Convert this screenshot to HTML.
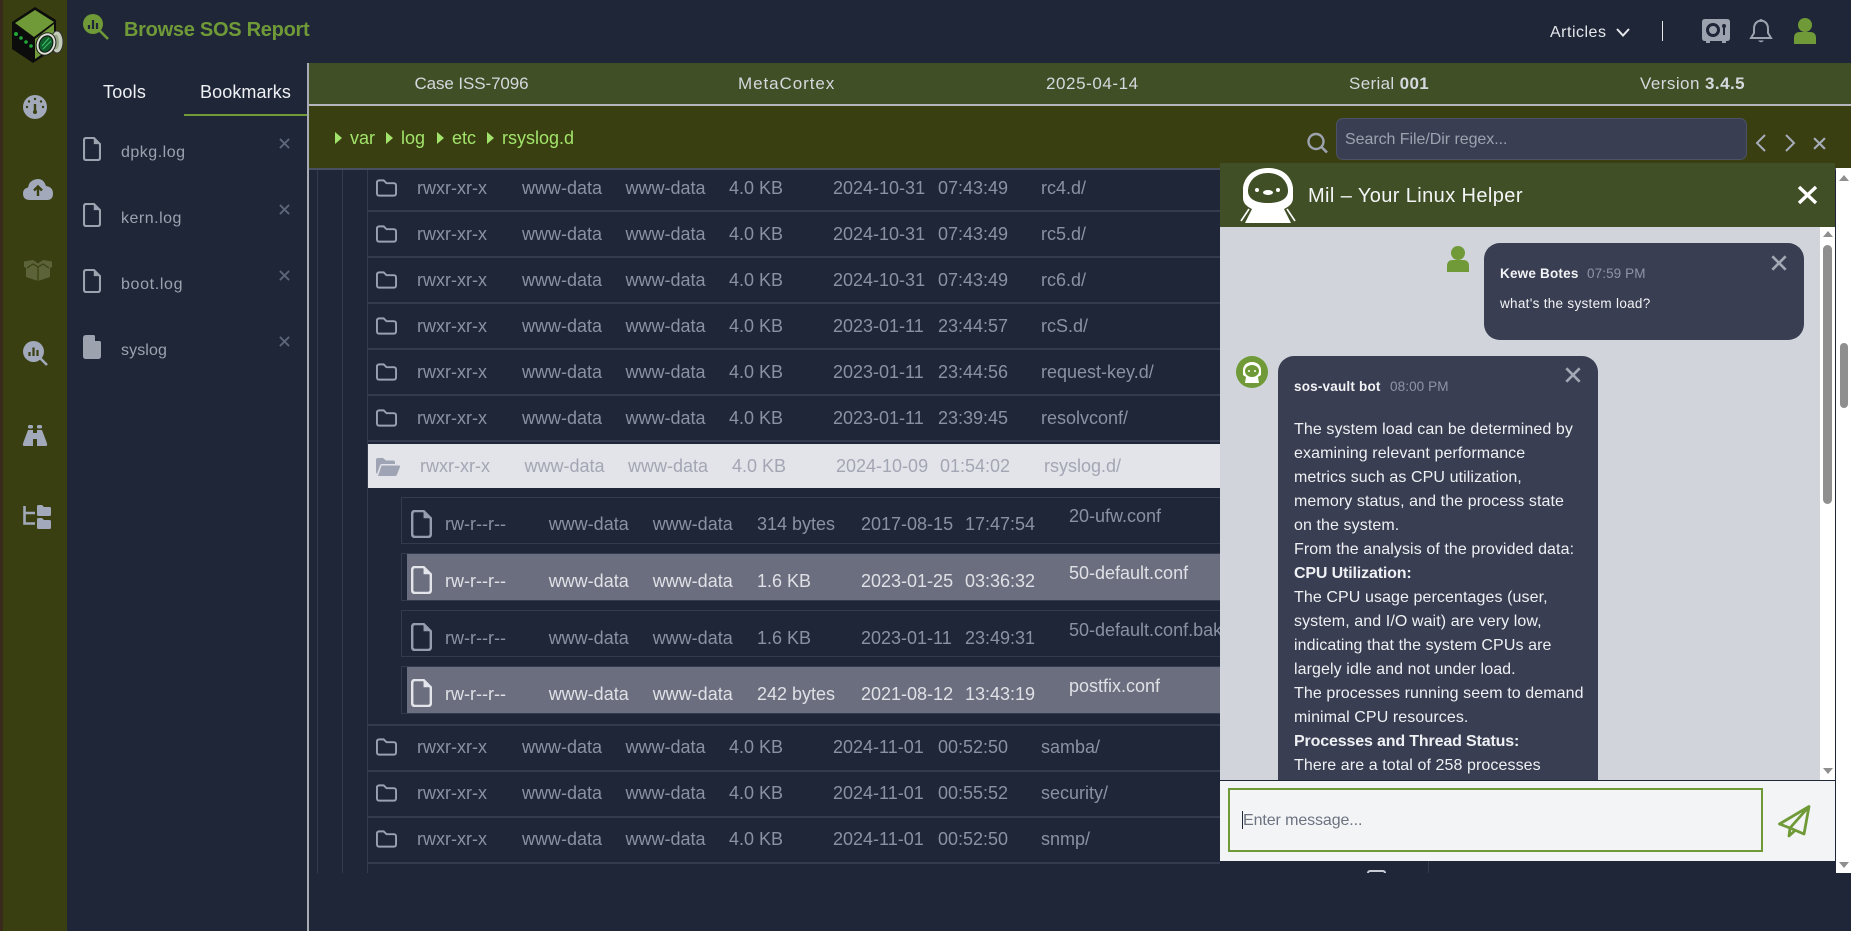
<!DOCTYPE html>
<html><head><meta charset="utf-8"><title>Browse SOS Report</title>
<style>
*{box-sizing:border-box;margin:0;padding:0}
html,body{width:1851px;height:931px;overflow:hidden;background:#1f2638;font-family:"Liberation Sans",sans-serif}
.a{position:absolute}
.t{position:absolute;white-space:nowrap}
svg{position:absolute;display:block;overflow:visible}
.r{position:absolute;left:0;top:0;width:1220px;height:20px;font-size:18px;line-height:20px;color:#8a91a3;margin-top:1px}
.r span{position:absolute;top:0;white-space:nowrap}
.c1{left:417px}.c2{left:522px}.c3{left:625.5px}.c4{left:729px}.c5{left:833px}.c6{left:938px}.c7{left:1041px}
.o .c1{left:420px}.o .c2{left:524.5px}.o .c3{left:628px}.o .c4{left:732px}.o .c5{left:836px}.o .c6{left:940px}.o .c7{left:1044px}
.f .c1{left:445px}.f .c2{left:548.7px}.f .c3{left:652.7px}.f .c4{left:757px}.f .c5{left:861px}.f .c6{left:965px}.f .c7{left:1069px;top:-8px}
.b{position:absolute;left:367px;width:853px;height:2px;background:#343b4f}
.fb{position:absolute;left:401px;width:819px;border:1px solid #343b4f;border-right:0}
.fh{position:absolute;left:407px;width:813px;background:#6b6e7e}
.m{position:absolute;left:1294px;white-space:nowrap;font-size:16px;line-height:24px;color:#eef0f3;letter-spacing:.09px;margin-top:1px}
.m b{letter-spacing:-.15px}
</style></head>
<body>
<svg width="0" height="0" style="position:absolute"><defs>
<symbol id="fld" viewBox="0 0 22 18"><path d="M1 3.500Q1 1 3.500 1H8L11 4H18.500Q21 4 21 6.500V14.500Q21 17 18.500 17H3.500Q1 17 1 14.500Z" fill="none" stroke="currentColor" stroke-width="2"/></symbol>
<symbol id="fil" viewBox="0 0 20 27"><path d="M4 1H12L19 8V23Q19 26 16 26H4Q1 26 1 23V4Q1 1 4 1Z" fill="none" stroke="currentColor" stroke-width="2.400"/><path d="M12 1L19 8H12Z" fill="currentColor"/></symbol>
<symbol id="xx" viewBox="0 0 12 12"><path d="M1 1L11 11M11 1L1 11" fill="none" stroke="currentColor" stroke-width="2"/></symbol>
</defs></svg>

<!-- left rail -->
<div class="a" style="left:0;top:0;width:67px;height:931px;background:#3a3f11"></div>
<div class="a" style="left:0;top:0;width:3px;height:931px;background:#3a2a1c"></div>
<svg style="left:0;top:0" width="67" height="67" viewBox="0 0 67 67">
<path d="M35 7L56 20V48L33 63L12 49V22Z" fill="#0c0c0c"/>
<path d="M35 10L54 22L34 37L15 23Z" fill="#6f9a37"/>
<path d="M35 39L54 24V46L35 59Z" fill="#6f9a37"/>
<circle cx="16" cy="34" r="2" fill="#1fa838"/><circle cx="21" cy="38" r="1.800" fill="#1fa838"/><circle cx="26" cy="42" r="1.800" fill="#1fa838"/><circle cx="31" cy="46" r="1.800" fill="#1fa838"/>
<ellipse cx="57" cy="42" rx="6" ry="11" fill="#c4ccbc" stroke="#333" stroke-width="1"/>
<ellipse cx="56" cy="42" rx="3" ry="7.500" fill="#97a788"/>
<ellipse cx="46" cy="44" rx="9.500" ry="11.500" transform="rotate(25 46 44)" fill="#d9dfd2" stroke="#222" stroke-width="1"/>
<ellipse cx="46" cy="44" rx="6.500" ry="8.500" transform="rotate(25 46 44)" fill="#0f5f2d" stroke="#111" stroke-width="1"/>
<path d="M42 46L49 38M43 49L51 41" stroke="#3fc06a" stroke-width="1"/>
</svg>
<!-- gauge -->
<svg style="left:23px;top:95px" width="24" height="24" viewBox="0 0 24 24"><circle cx="12" cy="12" r="12" fill="#a1a9ba"/><path d="M12 9V17" stroke="#3a3f11" stroke-width="2.400"/><circle cx="12" cy="17" r="2" fill="#3a3f11"/><circle cx="12" cy="4" r="1.200" fill="#3a3f11"/><circle cx="6" cy="6.500" r="1.200" fill="#3a3f11"/><circle cx="18" cy="6.500" r="1.200" fill="#3a3f11"/><circle cx="4" cy="12" r="1.200" fill="#3a3f11"/><circle cx="20" cy="12" r="1.200" fill="#3a3f11"/></svg>
<!-- cloud -->
<svg style="left:23px;top:178px" width="30" height="22" viewBox="0 0 30 22"><path d="M7 22Q0 22 0 15.500Q0 10.500 5 9.500Q6 3 12 1.500Q20 -1 23 8Q30 9 30 15.500Q30 22 24 22Z" fill="#a1a9ba"/><path d="M15 18V9M11 12.500L15 8.500L19 12.500" fill="none" stroke="#3a3f11" stroke-width="2.400"/></svg>
<!-- box -->
<svg style="left:24px;top:260px" width="28" height="21" viewBox="0 0 28 21"><path d="M0 1.500L9 0L14 3.500L19 0L28 1.500V7L26 8V17L14 21L2 17V8L0 7Z" fill="#5d6339"/><path d="M3 8L9 4L14 7L19 4L25 8M14 7V21" fill="none" stroke="#3a3f11" stroke-width="1.200"/></svg>
<!-- search chart -->
<svg style="left:23px;top:341px" width="25" height="25" viewBox="0 0 25 25"><circle cx="10.500" cy="10.500" r="10.500" fill="#a1a9ba"/><path d="M16 16L24 24" stroke="#a1a9ba" stroke-width="2.600"/><path d="M6.500 11V15M10.500 6.500V15M14.500 9V15" stroke="#3a3f11" stroke-width="2.200"/></svg>
<!-- binoculars -->
<svg style="left:23px;top:425px" width="24" height="21" viewBox="0 0 24 21"><path d="M5 5H10V21H1Q-1 21 0.500 17Z" fill="#a1a9ba"/><path d="M14 5H19L23.500 17Q25 21 23 21H14Z" fill="#a1a9ba"/><rect x="5" y="0" width="5" height="3.500" rx="1.500" fill="#a1a9ba"/><rect x="14" y="0" width="5" height="3.500" rx="1.500" fill="#a1a9ba"/><rect x="10" y="8" width="4" height="6" fill="#a1a9ba"/></svg>
<!-- tree -->
<svg style="left:23px;top:505px" width="28" height="24" viewBox="0 0 28 24"><path d="M1.500 1V18.500H12M1.500 8H12" fill="none" stroke="#a1a9ba" stroke-width="2.600"/><path d="M14 1.500Q14 0 15.500 0H19L21 2H26.500Q28 2 28 3.500V9.500Q28 11 26.500 11H15.500Q14 11 14 9.500Z" fill="#a1a9ba"/><path d="M14 14.500Q14 13 15.500 13H19L21 15H26.500Q28 15 28 16.500V22.500Q28 24 26.500 24H15.500Q14 24 14 22.500Z" fill="#a1a9ba"/></svg>

<!-- title -->
<svg style="left:83px;top:14px" width="26" height="26" viewBox="0 0 26 26"><circle cx="10" cy="10" r="10" fill="#6f9a37"/><path d="M16 16L25 25" stroke="#6f9a37" stroke-width="2.600"/><path d="M6 11V15M10 6V15M14 9V15" stroke="#1f2638" stroke-width="2.200"/></svg>
<div class="t" style="left:124px;top:18px;font-size:20px;line-height:24px;font-weight:bold;color:#6f9a37;letter-spacing:-.27px">Browse SOS Report</div>

<!-- tabs -->
<div class="t" style="left:103px;top:81px;font-size:18px;line-height:22px;color:#eef0f3;letter-spacing:.2px">Tools</div>
<div class="t" style="left:200px;top:81px;font-size:18px;line-height:22px;color:#eef0f3;letter-spacing:.1px">Bookmarks</div>
<div class="a" style="left:184px;top:114px;width:123px;height:2px;background:#6f9a37"></div>

<!-- bookmarks -->
<svg style="left:83px;top:137px;color:#9ca3af" width="18" height="24"><use href="#fil" width="18" height="24"/></svg>
<div class="t" style="left:121px;top:142px;font-size:16px;line-height:22px;color:#9ca3af;letter-spacing:.5px">dpkg.log</div>
<svg style="left:279px;top:138px;color:#5d6679" width="11" height="11"><use href="#xx" width="11" height="11"/></svg>
<svg style="left:83px;top:203px;color:#9ca3af" width="18" height="24"><use href="#fil" width="18" height="24"/></svg>
<div class="t" style="left:121px;top:208px;font-size:16px;line-height:22px;color:#9ca3af;letter-spacing:.5px">kern.log</div>
<svg style="left:279px;top:204px;color:#5d6679" width="11" height="11"><use href="#xx" width="11" height="11"/></svg>
<svg style="left:83px;top:269px;color:#9ca3af" width="18" height="24"><use href="#fil" width="18" height="24"/></svg>
<div class="t" style="left:121px;top:274px;font-size:16px;line-height:22px;color:#9ca3af;letter-spacing:.65px">boot.log</div>
<svg style="left:279px;top:270px;color:#5d6679" width="11" height="11"><use href="#xx" width="11" height="11"/></svg>
<svg style="left:83px;top:335px" width="18" height="24" viewBox="0 0 18 24"><path d="M3 0H11L18 7V21Q18 24 15 24H3Q0 24 0 21V3Q0 0 3 0Z" fill="#9ca3af"/><path d="M12 0L18 6H12Z" fill="#1f2638"/></svg>
<div class="t" style="left:121px;top:340px;font-size:16px;line-height:22px;color:#9ca3af;letter-spacing:.1px">syslog</div>
<svg style="left:279px;top:336px;color:#5d6679" width="11" height="11"><use href="#xx" width="11" height="11"/></svg>

<div class="a" style="left:307px;top:63px;width:2px;height:868px;background:#a6abb5"></div>

<!-- header right -->
<div class="t" style="left:1550px;top:22px;font-size:16px;line-height:22px;color:#e5e7eb;letter-spacing:.5px">Articles</div>
<svg style="left:1616px;top:28px" width="14" height="9" viewBox="0 0 14 9"><path d="M1 1L7 7.500L13 1" fill="none" stroke="#e5e7eb" stroke-width="2"/></svg>
<div class="a" style="left:1662px;top:21px;width:1px;height:20px;background:#e5e7eb"></div>
<svg style="left:1702px;top:19px" width="28" height="24" viewBox="0 0 28 24"><path d="M3 0H25Q28 0 28 3V19Q28 22 25 22H3Q0 22 0 19V3Q0 0 3 0Z" fill="#9ca3af"/><rect x="4" y="22" width="4" height="2" fill="#9ca3af"/><rect x="20" y="22" width="4" height="2" fill="#9ca3af"/><circle cx="11" cy="11" r="5.500" fill="none" stroke="#1f2638" stroke-width="3"/><circle cx="22" cy="7" r="2" fill="#1f2638"/><rect x="21" y="8" width="2" height="8" fill="#1f2638"/></svg>
<svg style="left:1750px;top:19px" width="22" height="24" viewBox="0 0 22 24"><path d="M11 1.500Q4 2.500 4 10V14L1 19H21L18 14V10Q18 2.500 11 1.500Z" fill="none" stroke="#9ca3af" stroke-width="2"/><path d="M8 21.500Q11 25 14 21.500" fill="#9ca3af"/><circle cx="11" cy="1.500" r="1.500" fill="#9ca3af"/></svg>
<svg style="left:1794px;top:18px" width="22" height="26" viewBox="0 0 22 26"><circle cx="11" cy="7" r="7" fill="#6f9a37"/><path d="M0 26V20Q0 14 6 14H16Q22 14 22 20V26Z" fill="#6f9a37"/></svg>

<!-- case bar -->
<div class="a" style="left:309px;top:63px;width:1542px;height:41px;background:#404f26"></div>
<div class="a" style="left:309px;top:104px;width:1542px;height:2px;background:#b3b6bd"></div>
<div class="t" style="left:414.500px;top:73px;font-size:17px;line-height:22px;color:#d5d8dd;letter-spacing:-.1px">Case ISS-7096</div>
<div class="t" style="left:738px;top:73px;font-size:17px;line-height:22px;color:#d5d8dd;letter-spacing:.93px">MetaCortex</div>
<div class="t" style="left:1046px;top:73px;font-size:17px;line-height:22px;color:#d5d8dd;letter-spacing:.57px">2025-04-14</div>
<div class="t" style="left:1349px;top:73px;font-size:17px;line-height:22px;color:#d5d8dd;letter-spacing:.35px">Serial <b>001</b></div>
<div class="t" style="left:1640px;top:73px;font-size:17px;line-height:22px;color:#d5d8dd;letter-spacing:.45px">Version <b>3.4.5</b></div>

<!-- path bar -->
<div class="a" style="left:309px;top:106px;width:1542px;height:62px;background:#3a3f11"></div>
<div class="a" style="left:309px;top:168px;width:1542px;height:2px;background:#4a5060"></div>
<svg style="left:335px;top:132px" width="7" height="12" viewBox="0 0 7 12"><path d="M0 0L7 6L0 12Z" fill="#a2e46b"/></svg>
<div class="t" style="left:350px;top:126px;font-size:18px;line-height:24px;color:#a2e46b">var</div>
<svg style="left:386px;top:132px" width="7" height="12" viewBox="0 0 7 12"><path d="M0 0L7 6L0 12Z" fill="#a2e46b"/></svg>
<div class="t" style="left:401px;top:126px;font-size:18px;line-height:24px;color:#a2e46b">log</div>
<svg style="left:437px;top:132px" width="7" height="12" viewBox="0 0 7 12"><path d="M0 0L7 6L0 12Z" fill="#a2e46b"/></svg>
<div class="t" style="left:452px;top:126px;font-size:18px;line-height:24px;color:#a2e46b">etc</div>
<svg style="left:487px;top:132px" width="7" height="12" viewBox="0 0 7 12"><path d="M0 0L7 6L0 12Z" fill="#a2e46b"/></svg>
<div class="t" style="left:502px;top:126px;font-size:18px;line-height:24px;color:#a2e46b">rsyslog.d</div>

<svg style="left:1307px;top:133px" width="21" height="20" viewBox="0 0 21 20"><circle cx="9" cy="8.500" r="7.500" fill="none" stroke="#9ca3af" stroke-width="2.400"/><path d="M14.500 14L20 19.500" stroke="#9ca3af" stroke-width="2.600"/></svg>
<div class="a" style="left:1336px;top:118px;width:411px;height:42px;background:#393e52;border:1px solid #4b5266;border-radius:7px"></div>
<div class="t" style="left:1345px;top:129px;font-size:16px;line-height:22px;color:#9ca3af;letter-spacing:-.05px">Search File/Dir regex...</div>
<svg style="left:1755px;top:134px" width="11" height="18" viewBox="0 0 11 18"><path d="M10 1L2 9L10 17" fill="none" stroke="#a6adba" stroke-width="2"/></svg>
<svg style="left:1785px;top:134px" width="11" height="18" viewBox="0 0 11 18"><path d="M1 1L9 9L1 17" fill="none" stroke="#a6adba" stroke-width="2"/></svg>
<svg style="left:1813px;top:137px;color:#a6adba" width="13" height="13"><use href="#xx" width="13" height="13"/></svg>

<!-- tree -->
<div class="a" style="left:317px;top:170px;width:1px;height:703px;background:#343b4f"></div>
<div class="a" style="left:342px;top:170px;width:1px;height:703px;background:#343b4f"></div>
<div class="a" style="left:367px;top:170px;width:1px;height:703px;background:#343b4f"></div>
<div class="b" style="top:210px"></div><div class="b" style="top:256px"></div><div class="b" style="top:302px"></div><div class="b" style="top:348px"></div><div class="b" style="top:394px"></div><div class="b" style="top:440px"></div><div class="b" style="top:724px"></div><div class="b" style="top:770px"></div><div class="b" style="top:816px"></div><div class="b" style="top:862px"></div>

<svg style="left:376px;top:179px;color:#99a1b3" width="21" height="18"><use href="#fld" width="21" height="18"/></svg>
<div class="r" style="top:177px"><span class="c1">rwxr-xr-x</span><span class="c2">www-data</span><span class="c3">www-data</span><span class="c4">4.0 KB</span><span class="c5">2024-10-31</span><span class="c6">07:43:49</span><span class="c7">rc4.d/</span></div>
<svg style="left:376px;top:225px;color:#99a1b3" width="21" height="18"><use href="#fld" width="21" height="18"/></svg>
<div class="r" style="top:223px"><span class="c1">rwxr-xr-x</span><span class="c2">www-data</span><span class="c3">www-data</span><span class="c4">4.0 KB</span><span class="c5">2024-10-31</span><span class="c6">07:43:49</span><span class="c7">rc5.d/</span></div>
<svg style="left:376px;top:271px;color:#99a1b3" width="21" height="18"><use href="#fld" width="21" height="18"/></svg>
<div class="r" style="top:269px"><span class="c1">rwxr-xr-x</span><span class="c2">www-data</span><span class="c3">www-data</span><span class="c4">4.0 KB</span><span class="c5">2024-10-31</span><span class="c6">07:43:49</span><span class="c7">rc6.d/</span></div>
<svg style="left:376px;top:317px;color:#99a1b3" width="21" height="18"><use href="#fld" width="21" height="18"/></svg>
<div class="r" style="top:315px"><span class="c1">rwxr-xr-x</span><span class="c2">www-data</span><span class="c3">www-data</span><span class="c4">4.0 KB</span><span class="c5">2023-01-11</span><span class="c6">23:44:57</span><span class="c7">rcS.d/</span></div>
<svg style="left:376px;top:363px;color:#99a1b3" width="21" height="18"><use href="#fld" width="21" height="18"/></svg>
<div class="r" style="top:361px"><span class="c1">rwxr-xr-x</span><span class="c2">www-data</span><span class="c3">www-data</span><span class="c4">4.0 KB</span><span class="c5">2023-01-11</span><span class="c6">23:44:56</span><span class="c7">request-key.d/</span></div>
<svg style="left:376px;top:409px;color:#99a1b3" width="21" height="18"><use href="#fld" width="21" height="18"/></svg>
<div class="r" style="top:407px"><span class="c1">rwxr-xr-x</span><span class="c2">www-data</span><span class="c3">www-data</span><span class="c4">4.0 KB</span><span class="c5">2023-01-11</span><span class="c6">23:39:45</span><span class="c7">resolvconf/</span></div>

<!-- open folder -->
<div class="a" style="left:368px;top:444px;width:852px;height:44px;background:#e3e4ea"></div>
<svg style="left:376px;top:458px" width="24" height="18" viewBox="0 0 24 18"><path d="M0 2Q0 0 2 0H7L10 2.500H17Q19 2.500 19 4.500V6H6Q4.500 6 4 7.500L1 16Q0 15 0 14Z" fill="#9ea4b3"/><path d="M5.500 7.500H23Q24.500 7.500 24 9L21 16.500Q20.500 18 19 18H2Z" fill="#9ea4b3"/></svg>
<div class="r o" style="top:455px;color:#a3a6b3"><span class="c1">rwxr-xr-x</span><span class="c2">www-data</span><span class="c3">www-data</span><span class="c4">4.0 KB</span><span class="c5">2024-10-09</span><span class="c6">01:54:02</span><span class="c7">rsyslog.d/</span></div>

<!-- files -->
<div class="fb" style="top:497px;height:47px"></div>
<div class="fb" style="top:553px;height:48px"></div><div class="fh" style="top:554px;height:46px"></div>
<div class="fb" style="top:610px;height:47px"></div>
<div class="fb" style="top:666px;height:48px"></div><div class="fh" style="top:667px;height:46px"></div>

<svg style="left:411px;top:510px;color:#959cad" width="21" height="28"><use href="#fil" width="21" height="28"/></svg>
<div class="r f" style="top:513px"><span class="c1">rw-r--r--</span><span class="c2">www-data</span><span class="c3">www-data</span><span class="c4">314 bytes</span><span class="c5">2017-08-15</span><span class="c6">17:47:54</span><span class="c7">20-ufw.conf</span></div>
<svg style="left:411px;top:566px;color:#e3e5ea" width="21" height="28"><use href="#fil" width="21" height="28"/></svg>
<div class="r f" style="top:570px;color:#dfe1e6"><span class="c1">rw-r--r--</span><span class="c2">www-data</span><span class="c3">www-data</span><span class="c4">1.6 KB</span><span class="c5">2023-01-25</span><span class="c6">03:36:32</span><span class="c7">50-default.conf</span></div>
<svg style="left:411px;top:623px;color:#959cad" width="21" height="28"><use href="#fil" width="21" height="28"/></svg>
<div class="r f" style="top:627px"><span class="c1">rw-r--r--</span><span class="c2">www-data</span><span class="c3">www-data</span><span class="c4">1.6 KB</span><span class="c5">2023-01-11</span><span class="c6">23:49:31</span><span class="c7">50-default.conf.bak</span></div>
<svg style="left:411px;top:679px;color:#e3e5ea" width="21" height="28"><use href="#fil" width="21" height="28"/></svg>
<div class="r f" style="top:683px;color:#dfe1e6"><span class="c1">rw-r--r--</span><span class="c2">www-data</span><span class="c3">www-data</span><span class="c4">242 bytes</span><span class="c5">2021-08-12</span><span class="c6">13:43:19</span><span class="c7">postfix.conf</span></div>

<svg style="left:376px;top:738px;color:#99a1b3" width="21" height="18"><use href="#fld" width="21" height="18"/></svg>
<div class="r" style="top:736px"><span class="c1">rwxr-xr-x</span><span class="c2">www-data</span><span class="c3">www-data</span><span class="c4">4.0 KB</span><span class="c5">2024-11-01</span><span class="c6">00:52:50</span><span class="c7">samba/</span></div>
<svg style="left:376px;top:784px;color:#99a1b3" width="21" height="18"><use href="#fld" width="21" height="18"/></svg>
<div class="r" style="top:782px"><span class="c1">rwxr-xr-x</span><span class="c2">www-data</span><span class="c3">www-data</span><span class="c4">4.0 KB</span><span class="c5">2024-11-01</span><span class="c6">00:55:52</span><span class="c7">security/</span></div>
<svg style="left:376px;top:830px;color:#99a1b3" width="21" height="18"><use href="#fld" width="21" height="18"/></svg>
<div class="r" style="top:828px"><span class="c1">rwxr-xr-x</span><span class="c2">www-data</span><span class="c3">www-data</span><span class="c4">4.0 KB</span><span class="c5">2024-11-01</span><span class="c6">00:52:50</span><span class="c7">snmp/</span></div>

<div class="a" style="left:1367px;top:870px;width:19px;height:3px;background:#1f2638;border:2px solid #c8ccd4;border-bottom:0;border-radius:3px 3px 0 0"></div>
<div class="a" style="left:1428px;top:861px;width:1px;height:12px;background:#343b4f"></div>

<!-- outer scrollbar -->
<div class="a" style="left:1836px;top:168px;width:15px;height:705px;background:#fff"></div>
<svg style="left:1839px;top:175px" width="10" height="6"><path d="M0 6L5 0L10 6Z" fill="#8f8f8f"/></svg>
<svg style="left:1839px;top:862px" width="10" height="6"><path d="M0 0L5 6L10 0Z" fill="#8f8f8f"/></svg>
<div class="a" style="left:1840px;top:343px;width:8px;height:65px;background:#8f8f8f;border-radius:4px"></div>

<!-- chat -->
<div class="a" style="left:1220px;top:163px;width:615px;height:64px;background:#404f26"></div>
<svg style="left:1240px;top:168px" width="56" height="55" viewBox="0 0 56 55">
<path d="M28 0C12 0 4 10 3 20V30C3 36 8 39 12 41L5 55H51L44 41C48 39 53 36 53 30V20C52 10 44 0 28 0Z" fill="#fff"/>
<path d="M28 5C15 5 8 14 8 23C8 31 16 35 28 35C40 35 48 31 48 23C48 14 41 5 28 5Z" fill="#404f26"/>
<circle cx="17" cy="22" r="2" fill="#fff"/><circle cx="38" cy="22" r="2" fill="#fff"/><ellipse cx="28" cy="24.500" rx="5" ry="2.500" fill="#fff"/>
<path d="M9 41L1 53M47 41L55 53" stroke="#fff" stroke-width="1.600" fill="none"/>
</svg>
<div class="t" style="left:1308px;top:184px;font-size:20px;line-height:24px;color:#f4f5f7;letter-spacing:.4px">Mil – Your Linux Helper</div>
<svg style="left:1797px;top:186px" width="21" height="18" viewBox="0 0 21 18"><path d="M2 1L19 17M19 1L2 17" stroke="#fff" stroke-width="3.400" fill="none"/></svg>

<div class="a" style="left:1220px;top:227px;width:600px;height:553px;background:#d1d5db;overflow:hidden"></div>
<!-- inner scrollbar -->
<div class="a" style="left:1820px;top:227px;width:15px;height:553px;background:#fff"></div>
<svg style="left:1823px;top:231px" width="10" height="6"><path d="M0 6L5 0L10 6Z" fill="#8f8f8f"/></svg>
<svg style="left:1823px;top:768px" width="10" height="6"><path d="M0 0L5 6L10 0Z" fill="#8f8f8f"/></svg>
<div class="a" style="left:1823px;top:245px;width:9px;height:259px;background:#8f8f8f;border-radius:5px"></div>

<!-- user msg -->
<svg style="left:1447px;top:246px" width="22" height="26" viewBox="0 0 22 26"><circle cx="11" cy="7" r="7" fill="#6f9a37"/><path d="M0 26V20Q0 14 6 14H16Q22 14 22 20V26Z" fill="#6f9a37"/></svg>
<div class="a" style="left:1484px;top:243px;width:320px;height:97px;background:#393e52;border-radius:16px"></div>
<div class="t" style="left:1500px;top:264px;font-size:13.500px;line-height:20px;font-weight:bold;color:#f2f3f5;letter-spacing:.2px">Kewe Botes</div>
<div class="t" style="left:1587px;top:264px;font-size:13.500px;line-height:20px;color:#8f95a6;letter-spacing:.1px">07:59 PM</div>
<div class="t" style="left:1500px;top:294px;font-size:13.500px;line-height:20px;color:#f2f3f5;letter-spacing:.3px">what's the system load?</div>
<svg style="left:1771px;top:255px;color:#a3a8b5" width="16" height="16"><use href="#xx" width="16" height="16"/></svg>

<!-- bot msg -->
<svg style="left:1236px;top:356px" width="32" height="32" viewBox="0 0 32 32"><circle cx="16" cy="16" r="16" fill="#6f9a37"/><path d="M16 6C10 6 7 10 7 14V19L10 21L9 27H23L22 21L25 19V14C25 10 22 6 16 6Z" fill="#fff"/><ellipse cx="16" cy="15" rx="7" ry="6" fill="#6f9a37"/><circle cx="13" cy="15" r="1" fill="#fff"/><circle cx="19" cy="15" r="1" fill="#fff"/></svg>
<div class="a" style="left:1278px;top:356px;width:320px;height:424px;background:#393e52;border-radius:16px 16px 0 0"></div>
<div class="t" style="left:1294px;top:377px;font-size:13.500px;line-height:20px;font-weight:bold;color:#f2f3f5;letter-spacing:.2px">sos-vault bot</div>
<div class="t" style="left:1390px;top:377px;font-size:13.500px;line-height:20px;color:#8f95a6;letter-spacing:.1px">08:00 PM</div>
<svg style="left:1565px;top:367px;color:#a3a8b5" width="16" height="16"><use href="#xx" width="16" height="16"/></svg>
<div class="m" style="top:417px">The system load can be determined by</div>
<div class="m" style="top:441px">examining relevant performance</div>
<div class="m" style="top:465px">metrics such as CPU utilization,</div>
<div class="m" style="top:489px">memory status, and the process state</div>
<div class="m" style="top:513px">on the system.</div>
<div class="m" style="top:537px">From the analysis of the provided data:</div>
<div class="m" style="top:561px"><b>CPU Utilization:</b></div>
<div class="m" style="top:585px">The CPU usage percentages (user,</div>
<div class="m" style="top:609px">system, and I/O wait) are very low,</div>
<div class="m" style="top:633px">indicating that the system CPUs are</div>
<div class="m" style="top:657px">largely idle and not under load.</div>
<div class="m" style="top:681px">The processes running seem to demand</div>
<div class="m" style="top:705px">minimal CPU resources.</div>
<div class="m" style="top:729px"><b>Processes and Thread Status:</b></div>
<div class="m" style="top:753px">There are a total of 258 processes</div>

<!-- input -->
<div class="a" style="left:1220px;top:780px;width:616px;height:1px;background:#1f2638"></div>
<div class="a" style="left:1220px;top:781px;width:615px;height:80px;background:#f3f4f6"></div>
<div class="a" style="left:1835px;top:227px;width:1px;height:646px;background:#1f2638"></div>
<div class="a" style="left:1228px;top:788px;width:535px;height:64px;border:2px solid #6f9a37"></div>
<div class="a" style="left:1242px;top:811px;width:1px;height:18px;background:#1f2638"></div>
<div class="t" style="left:1243px;top:810px;font-size:16px;line-height:22px;color:#6b7280;letter-spacing:-.1px">Enter message...</div>
<svg style="left:1778px;top:805px" width="32" height="32" viewBox="0 0 32 32"><path d="M31 1.500L1.500 19L12 23L26 29L31 1.500ZM31 1.500L12 23L11 31L17 25.500" fill="none" stroke="#6f9a37" stroke-width="2.800" stroke-linejoin="round"/></svg>
</body></html>
